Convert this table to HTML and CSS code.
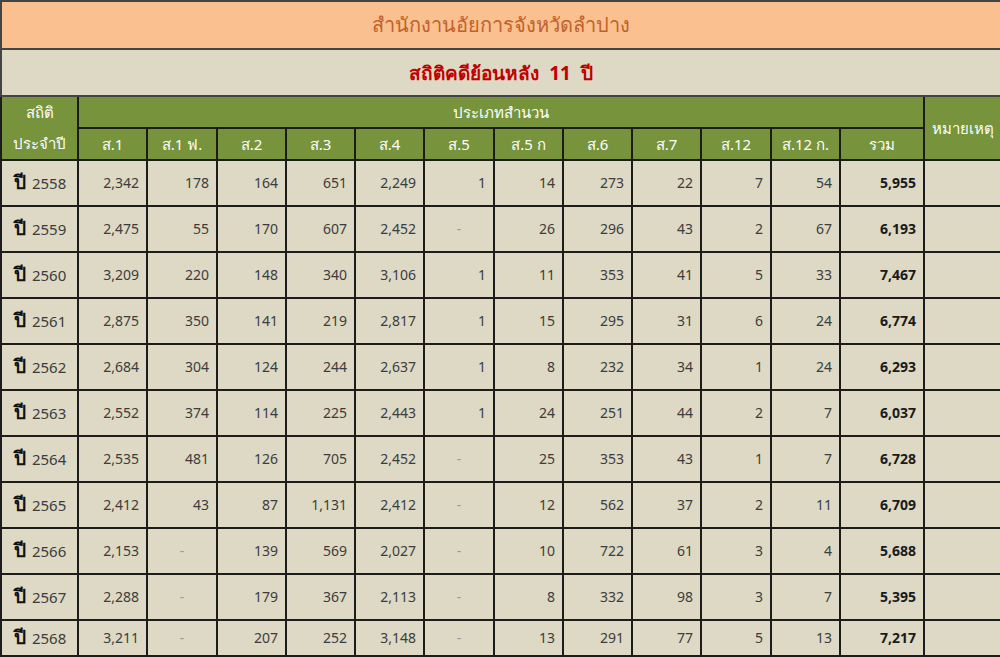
FILE: index.html
```html
<!DOCTYPE html>
<html lang="th">
<head>
<meta charset="utf-8">
<title>สถิติคดีย้อนหลัง 11 ปี</title>
<link rel="stylesheet" href="styles.css">
</head>
<body>
<table class="stats">
  <colgroup>
    <col class="c-year"><col class="c-n"><col class="c-n2"><col class="c-n"><col class="c-n"><col class="c-n"><col class="c-n2"><col class="c-n"><col class="c-n"><col class="c-n"><col class="c-n2"><col class="c-n"><col class="c-total"><col class="c-note">
  </colgroup>
  <thead>
    <tr class="title-row"><th colspan="14">สำนักงานอัยการจังหวัดลำปาง</th></tr>
    <tr class="sub-row"><th colspan="14">สถิติคดีย้อนหลัง&nbsp;&nbsp;11&nbsp;&nbsp;ปี</th></tr>
    <tr class="head1">
      <th rowspan="2" class="h-year"><span>สถิติ</span><span>ประจำปี</span></th>
      <th colspan="12">ประเภทสำนวน</th>
      <th rowspan="2" class="h-note">หมายเหตุ</th>
    </tr>
    <tr class="head2">
      <th>ส.1</th><th>ส.1 ฟ.</th><th>ส.2</th><th>ส.3</th><th>ส.4</th><th>ส.5</th><th>ส.5 ก</th><th>ส.6</th><th>ส.7</th><th>ส.12</th><th>ส.12 ก.</th><th>รวม</th>
    </tr>
  </thead>
  <tbody>
    <tr><td class="yr"><b>ปี</b> 2558</td><td>2,342</td><td>178</td><td>164</td><td>651</td><td>2,249</td><td>1</td><td>14</td><td>273</td><td>22</td><td>7</td><td>54</td><td class="tot">5,955</td><td class="note"></td></tr>
    <tr><td class="yr"><b>ปี</b> 2559</td><td>2,475</td><td>55</td><td>170</td><td>607</td><td>2,452</td><td class="dash">-</td><td>26</td><td>296</td><td>43</td><td>2</td><td>67</td><td class="tot">6,193</td><td class="note"></td></tr>
    <tr><td class="yr"><b>ปี</b> 2560</td><td>3,209</td><td>220</td><td>148</td><td>340</td><td>3,106</td><td>1</td><td>11</td><td>353</td><td>41</td><td>5</td><td>33</td><td class="tot">7,467</td><td class="note"></td></tr>
    <tr><td class="yr"><b>ปี</b> 2561</td><td>2,875</td><td>350</td><td>141</td><td>219</td><td>2,817</td><td>1</td><td>15</td><td>295</td><td>31</td><td>6</td><td>24</td><td class="tot">6,774</td><td class="note"></td></tr>
    <tr><td class="yr"><b>ปี</b> 2562</td><td>2,684</td><td>304</td><td>124</td><td>244</td><td>2,637</td><td>1</td><td>8</td><td>232</td><td>34</td><td>1</td><td>24</td><td class="tot">6,293</td><td class="note"></td></tr>
    <tr><td class="yr"><b>ปี</b> 2563</td><td>2,552</td><td>374</td><td>114</td><td>225</td><td>2,443</td><td>1</td><td>24</td><td>251</td><td>44</td><td>2</td><td>7</td><td class="tot">6,037</td><td class="note"></td></tr>
    <tr><td class="yr"><b>ปี</b> 2564</td><td>2,535</td><td>481</td><td>126</td><td>705</td><td>2,452</td><td class="dash">-</td><td>25</td><td>353</td><td>43</td><td>1</td><td>7</td><td class="tot">6,728</td><td class="note"></td></tr>
    <tr><td class="yr"><b>ปี</b> 2565</td><td>2,412</td><td>43</td><td>87</td><td>1,131</td><td>2,412</td><td class="dash">-</td><td>12</td><td>562</td><td>37</td><td>2</td><td>11</td><td class="tot">6,709</td><td class="note"></td></tr>
    <tr><td class="yr"><b>ปี</b> 2566</td><td>2,153</td><td class="dash">-</td><td>139</td><td>569</td><td>2,027</td><td class="dash">-</td><td>10</td><td>722</td><td>61</td><td>3</td><td>4</td><td class="tot">5,688</td><td class="note"></td></tr>
    <tr><td class="yr"><b>ปี</b> 2567</td><td>2,288</td><td class="dash">-</td><td>179</td><td>367</td><td>2,113</td><td class="dash">-</td><td>8</td><td>332</td><td>98</td><td>3</td><td>7</td><td class="tot">5,395</td><td class="note"></td></tr>
    <tr class="last"><td class="yr"><b>ปี</b> 2568</td><td>3,211</td><td class="dash">-</td><td>207</td><td>252</td><td>3,148</td><td class="dash">-</td><td>13</td><td>291</td><td>77</td><td>5</td><td>13</td><td class="tot">7,217</td><td class="note"></td></tr>
  </tbody>
</table>
</body>
</html>
```
FILE: styles.css
```css
html, body {
  margin: 0;
  padding: 0;
  background: #ffffff;
}

.stats {
  width: 1000px;
  table-layout: fixed;
  border-collapse: collapse;
  font-family: "Noto Sans", "DejaVu Sans", sans-serif;
  font-size: 14px;
  color: #3c3c3c;
}

.c-year { width: 77px; }
.c-n { width: 69px; }
.c-n2 { width: 70px; }
.c-total { width: 84px; }
.c-note { width: 77px; }

.stats th,
.stats td {
  border: 2px solid #1c1c1c;
  padding: 0;
}

.title-row th {
  height: 46px;
  background: #fac090;
  color: #c0622a;
  font-size: 20px;
  font-weight: normal;
  border-color: #444444;
}

.sub-row th {
  height: 45px;
  background: #ddd9c4;
  color: #c00000;
  font-size: 19px;
  font-weight: bold;
  border-color: #444444;
}

.head1 th,
.head2 th {
  background: #77933c;
  color: #ffffff;
  font-weight: normal;
  font-size: 15px;
  height: 30px;
  line-height: 20px;
}

.h-year span {
  display: block;
  line-height: 31px;
}

.stats tbody td {
  background: #ddd9c4;
  height: 44px;
  text-align: right;
  padding-right: 7px;
  font-size: 14px;
  line-height: 20px;
}

.stats tbody tr.last td {
  height: 34px;
}

.stats td.yr {
  text-align: left;
  padding-left: 12px;
  padding-right: 0;
  white-space: nowrap;
  font-size: 15px;
}

.yr b {
  font-size: 19px;
  line-height: 14px;
  color: #111111;
  margin-right: 2px;
}

.stats td.dash {
  text-align: center;
  padding-right: 0;
  color: #9a9a9a;
}

.stats td.tot {
  font-weight: bold;
  color: #1a1a1a;
}
```
